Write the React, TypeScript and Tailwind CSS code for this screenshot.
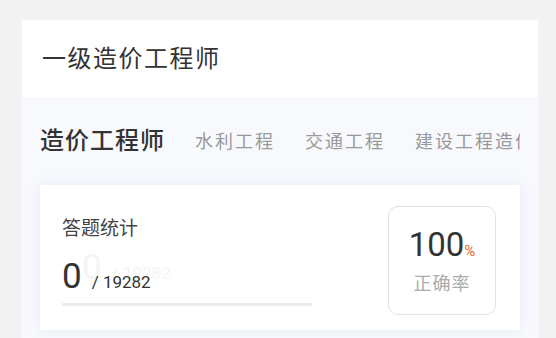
import React from 'react'

const TABS = ['水利工程', '交通工程', '建设工程造价', '一级建造师']

function StatsCard() {
  return (
    <div className="flex h-[145px] justify-between bg-white pl-[22px] pr-[24px] pt-[21px] shadow-[0_0_10px_rgba(205,218,240,0.45)]">
      {/* Left: answered count */}
      <div className="relative w-[250px]">
        <p className="mt-[10px] text-[19px] leading-[26px] text-[#444]">答题统计</p>
        <div className="pointer-events-none absolute left-[20px] top-[42px] flex items-baseline text-[#f4f4f4]">
          <span className="text-[35px] leading-[40px]">0</span>
          <span className="ml-[10px] text-[17px]">/ 19282</span>
        </div>
        <div className="relative mt-[15px] flex items-baseline">
          <span className="text-[35px] leading-[40px] text-[#333]">0</span>
          <span className="ml-[10px] text-[17px] text-[#333]">/ 19282</span>
        </div>
        <div className="mt-[6px] h-[3px] w-[250px] bg-[#ececec]" />
      </div>

      {/* Right: accuracy */}
      <div className="flex h-[109px] w-[108px] flex-col items-center justify-center rounded-[10px] border border-[#e2e2e2]">
        <div className="flex items-baseline">
          <span className="text-[33px] leading-[38px] text-[#333]">100</span>
          <span className="text-[15px] text-[#e8642c]">%</span>
        </div>
        <span className="mt-[8px] text-[18px] leading-[24px] tracking-[1px] text-[#aaa]">正确率</span>
      </div>
    </div>
  )
}

export default function App() {
  return (
    <div
      className="h-[338px] w-[556px] overflow-hidden bg-[#f2f2f2] pl-[22px] pr-[18px] pt-5"
      style={{ fontFamily: 'Roboto, "Noto Sans CJK SC", sans-serif' }}
    >
      <div className="bg-white">
        <div className="flex h-[77px] items-center pl-[20px] text-[24px] tracking-[1.5px] text-[#333]">
          一级造价工程师
        </div>
        <div className="bg-[#f8f9fd] px-[18px] pb-10">
          <div className="flex h-[88px] items-center gap-[30px] overflow-hidden whitespace-nowrap">
            <span className="shrink-0 text-[24px] font-medium tracking-[1px] text-[#333]">造价工程师</span>
            {TABS.map((tab) => (
              <span key={tab} className="shrink-0 text-[18px] tracking-[2px] text-[#999]">
                {tab}
              </span>
            ))}
          </div>
          <StatsCard />
        </div>
      </div>
    </div>
  )
}
